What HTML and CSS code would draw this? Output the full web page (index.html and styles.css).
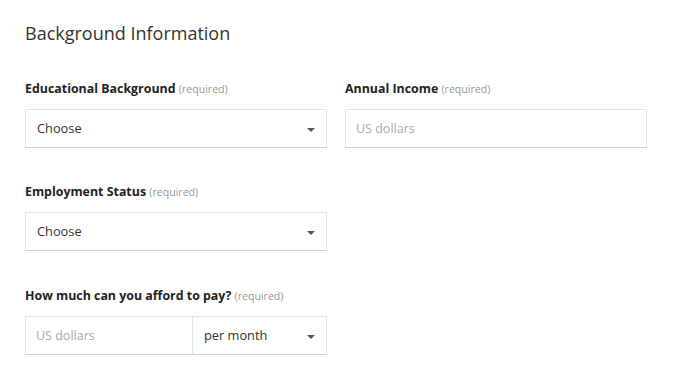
FILE: index.html
```html
<!DOCTYPE html>
<html>
<head>
<meta charset="utf-8">
<link rel="stylesheet" href="styles.css">
</head>
<body>
<div class="page">
  <h1 class="title">Background Information</h1>
  <div class="row">
    <div class="field">
      <div class="label">Educational Background <span class="req">(required)</span></div>
      <div class="box select"><span class="value">Choose</span><span class="caret"></span></div>
    </div>
    <div class="field">
      <div class="label">Annual Income <span class="req">(required)</span></div>
      <div class="box"><span class="placeholder">US dollars</span></div>
    </div>
  </div>
  <div class="row">
    <div class="field">
      <div class="label">Employment Status <span class="req">(required)</span></div>
      <div class="box select"><span class="value">Choose</span><span class="caret"></span></div>
    </div>
  </div>
  <div class="row row-last">
    <div class="field">
      <div class="label">How much can you afford to pay? <span class="req">(required)</span></div>
      <div class="split">
        <div class="box part-left"><span class="placeholder">US dollars</span></div>
        <div class="box select part-right"><span class="value">per month</span><span class="caret"></span></div>
      </div>
    </div>
  </div>
</div>
</body>
</html>
```

FILE: styles.css
```css
html, body {
  margin: 0;
  padding: 0;
  background: #fff;
}
body {
  font-family: "Open Sans", "DejaVu Sans", sans-serif;
  color: #333;
}
.page {
  padding: 20px 25px;
  display: flex;
  flex-direction: column;
  gap: 36px;
}
.title {
  margin: 0;
  font-size: 18px;
  font-weight: 400;
  line-height: 26px;
  color: #333;
  margin-bottom: -1px;
}
.row {
  display: flex;
  gap: 18px;
}
.row-last {
  margin-top: 1px;
}
.field {
  width: 302px;
  display: flex;
  flex-direction: column;
  gap: 12px;
}
.label {
  font-size: 12.4px;
  font-weight: 700;
  line-height: 16px;
  color: #222;
}
.req {
  font-size: 10.6px;
  font-weight: 400;
  color: #999;
}
.box {
  box-sizing: border-box;
  height: 39px;
  border: 1px solid #e2e2e2;
  border-bottom-color: #d2d2d2;
  display: flex;
  align-items: center;
  padding: 0 11px;
  font-size: 12.8px;
}
.value {
  color: #333;
  flex: 1;
  margin-top: -2px;
}
.placeholder {
  color: #aaa;
  font-size: 12.5px;
  margin-left: -1px;
}
.caret {
  width: 0;
  height: 0;
  border-left: 4px solid transparent;
  border-right: 4px solid transparent;
  border-top: 4px solid #555;
  margin-top: 2px;
}
.split {
  display: flex;
}
.part-left {
  width: 167px;
  border-right: none;
}
.part-right {
  flex: 1;
}
```
